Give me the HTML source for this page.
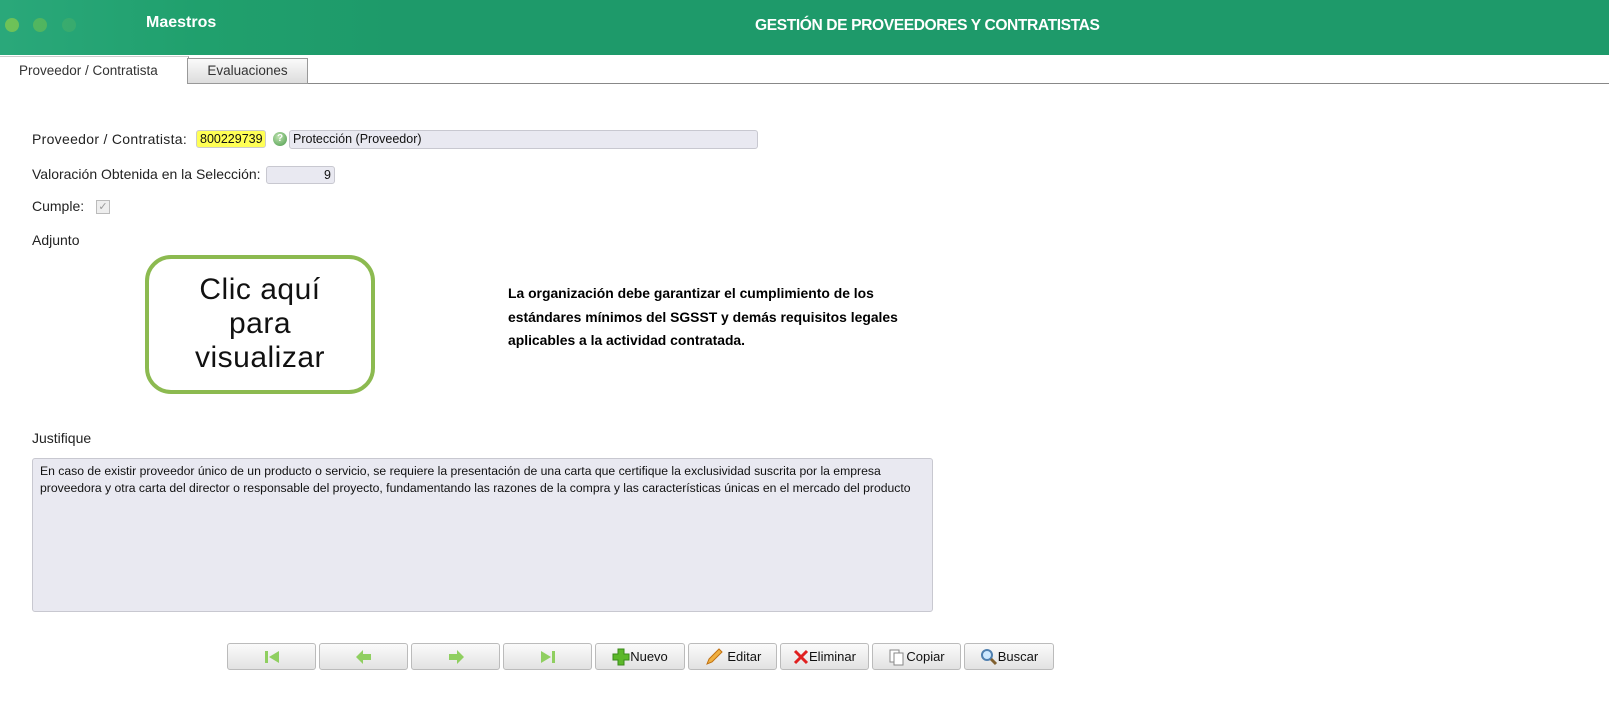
<!DOCTYPE html>
<html><head><meta charset="utf-8"><style>
*{box-sizing:border-box;margin:0;padding:0}
body{width:1609px;height:711px;background:#fff;font-family:"Liberation Sans",sans-serif;color:#222;position:relative;overflow:hidden}
.hdr{position:absolute;left:0;top:0;width:1609px;height:55px;background:linear-gradient(90deg,#2aa87a 0px,#20a06d 200px,#1e9a6a 400px,#1e9a6a 100%)}
.dot{position:absolute;top:18px;width:14px;height:14px;border-radius:50%}
.abs{position:absolute;white-space:nowrap}
.tabline{position:absolute;left:0;top:83px;width:1609px;height:1px;background:#888}
.btn{position:absolute;top:643px;height:27px;border:1px solid #bbb;border-radius:3px;background:linear-gradient(#fafafa,#e2e2e2);font-size:13px;color:#111;display:flex;align-items:center;justify-content:center}
.in{position:absolute;border:1px solid #c8c8d0;border-radius:3px;background:#e9e9f1;font-size:12px;color:#111}
.lb{font-size:14px}
</style></head><body>
<div class="hdr">
<div class="dot" style="left:5px;background:#7ec850;opacity:.8"></div>
<div class="dot" style="left:33px;background:#6cc050;opacity:.6"></div>
<div class="dot" style="left:62px;background:#5cb860;opacity:.35"></div>
<div class="abs" style="left:146px;top:14px;color:#fff;font-weight:bold;font-size:16px">Maestros</div>
<div class="abs" style="left:755px;top:17px;color:#fff;font-weight:bold;font-size:15.6px;letter-spacing:-.4px">GESTIÓN DE PROVEEDORES Y CONTRATISTAS</div>
</div>
<div class="tabline"></div>
<div class="abs" style="left:0;top:56px;width:189px;height:28px;background:#fff;border-right:1px solid #999;border-top:1px solid #ccc"></div>
<div class="abs" style="left:19px;top:63px;font-size:13.5px;color:#333">Proveedor / Contratista</div>
<div class="abs" style="left:187px;top:58px;width:121px;height:26px;border:1px solid #999;background:linear-gradient(#fafafa,#ddd);font-size:13.5px;color:#333;text-align:center;line-height:24px">Evaluaciones</div>

<div class="abs lb" style="left:32px;top:131px;letter-spacing:.3px">Proveedor / Contratista:</div>
<div class="abs" style="left:196px;top:130px;width:70px;height:18px;background:#ffff55;border:1px solid #ccc;border-radius:3px;font-size:12.5px;line-height:16px;padding-left:3px;color:#111">800229739</div>
<div class="abs" style="left:273px;top:132px;width:14px;height:14px;border-radius:50%;background:radial-gradient(circle at 40% 35%,#bfe3b0,#4a9a4a);color:#fff;font-size:10px;font-weight:bold;text-align:center;line-height:14px">?</div>
<div class="in" style="left:289px;top:130px;width:469px;height:19px;line-height:17px;padding-left:3px;font-size:12.5px">Protección (Proveedor)</div>
<div class="abs lb" style="left:32px;top:166px">Valoración Obtenida en la Selección:</div>
<div class="in" style="left:266px;top:166px;width:69px;height:18px;line-height:16px;text-align:right;padding-right:3px;font-size:12.5px">9</div>
<div class="abs lb" style="left:32px;top:198px">Cumple:</div>
<div class="abs" style="left:96px;top:200px;width:14px;height:14px;border:1px solid #bbb;background:#eee;color:#999;font-size:11px;line-height:12px;text-align:center">✓</div>
<div class="abs lb" style="left:32px;top:232px">Adjunto</div>

<div class="abs" style="left:145px;top:255px;width:230px;height:139px;border:4px solid #8cba50;border-radius:26px;background:#fff;text-align:center;font-size:30px;line-height:34px;padding-top:14px;color:#111;letter-spacing:.5px">Clic aquí<br>para<br>visualizar</div>

<div class="abs" style="left:508px;top:282px;font-size:13.9px;font-weight:bold;line-height:23.5px;color:#000">La organización debe garantizar el cumplimiento de los<br>estándares mínimos del SGSST y demás requisitos legales<br>aplicables a la actividad contratada.</div>

<div class="abs lb" style="left:32px;top:430px">Justifique</div>
<div class="in" style="left:32px;top:458px;width:901px;height:154px;padding:4px 7px;font-size:12.2px;line-height:17px;white-space:nowrap;overflow:hidden">En caso de existir proveedor único de un producto o servicio, se requiere la presentación de una carta que certifique la exclusividad suscrita por la empresa<br>proveedora y otra carta del director o responsable del proyecto, fundamentando las razones de la compra y las características únicas en el mercado del producto</div>

<div class="btn" style="left:227px;width:89px"><svg width="18" height="16"><rect x="2" y="2" width="3" height="12" fill="#8fcf60"/><path d="M16 2 L6 8 L16 14Z" fill="#8fcf60"/></svg></div>
<div class="btn" style="left:319px;width:89px"><svg width="18" height="16"><path d="M1 8 L8 1 L8 5 L16 5 L16 11 L8 11 L8 15Z" fill="#8fcf60"/></svg></div>
<div class="btn" style="left:411px;width:89px"><svg width="18" height="16"><path d="M17 8 L10 1 L10 5 L2 5 L2 11 L10 11 L10 15Z" fill="#8fcf60"/></svg></div>
<div class="btn" style="left:503px;width:89px"><svg width="18" height="16"><rect x="13" y="2" width="3" height="12" fill="#8fcf60"/><path d="M2 2 L12 8 L2 14Z" fill="#8fcf60"/></svg></div>
<div class="btn" style="left:595px;width:90px"><svg width="18" height="18"><path d="M6 1h6v5h5v6h-5v5H6v-5H1V6h5z" fill="#5cb82a" stroke="#3a8a1a"/></svg>Nuevo</div>
<div class="btn" style="left:688px;width:89px"><svg width="20" height="18"><path d="M3 16 L5 11 L15 1 L18 4 L8 14Z" fill="#f0b040" stroke="#c07010"/></svg>&nbsp;Editar</div>
<div class="btn" style="left:780px;width:89px"><svg width="16" height="16"><path d="M2 2L14 14M14 2L2 14" stroke="#e02020" stroke-width="3"/></svg>Eliminar</div>
<div class="btn" style="left:872px;width:89px"><svg width="18" height="18"><rect x="2" y="2" width="9" height="12" fill="#fff" stroke="#888"/><rect x="6" y="5" width="9" height="12" fill="#fff" stroke="#888"/></svg>Copiar</div>
<div class="btn" style="left:964px;width:90px"><svg width="18" height="18"><circle cx="7" cy="7" r="5" fill="#cde8ff" stroke="#5080b0" stroke-width="2"/><path d="M11 11l5 5" stroke="#806030" stroke-width="3"/></svg>Buscar</div>
</body></html>
